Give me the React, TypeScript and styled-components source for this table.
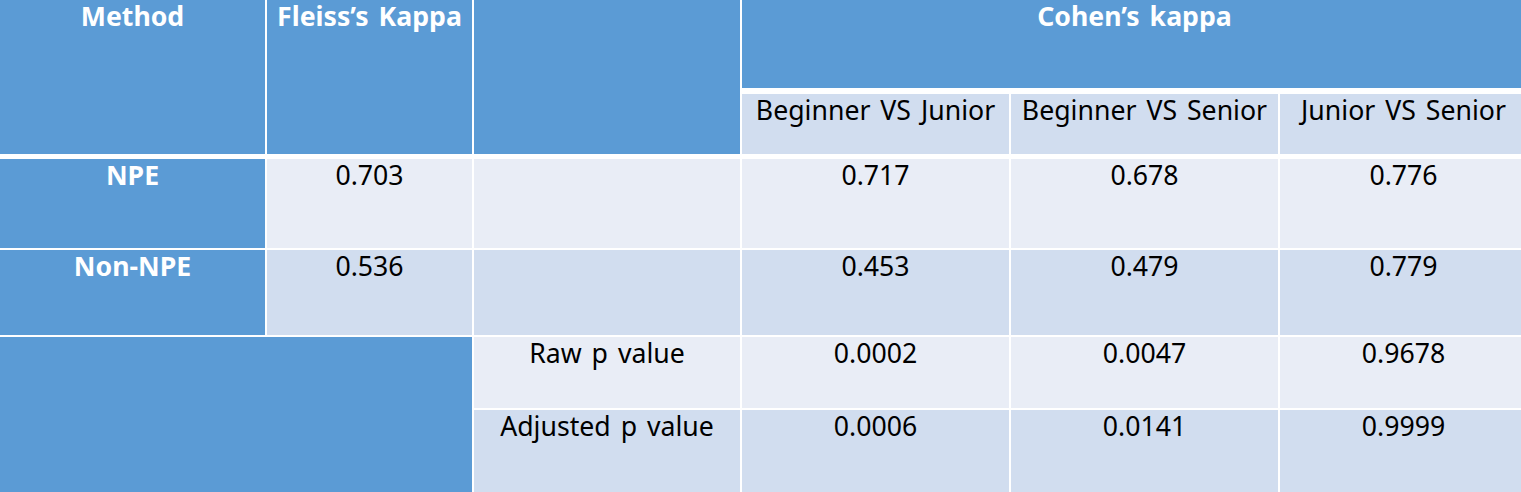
import React from 'react';
import styled, { createGlobalStyle } from 'styled-components';

const GlobalStyle = createGlobalStyle`
  html, body {
    margin: 0;
    padding: 0;
    background: #ffffff;
    overflow: hidden;
  }
`;

const Grid = styled.div`
  display: grid;
  grid-template-columns: 265px 205px 266px 267px 267px 247px;
  grid-template-rows: 92px 63px 89px 85px 71px 90px;
  gap: 2px;
  width: 1527px;
  background: #ffffff;
  font-family: 'Noto Sans', 'Noto Sans CJK KR', sans-serif;
  font-size: 26.67px;
  line-height: 1.2;
  color: #000000;
`;

type Tone = 'head' | 'light' | 'dark';

const toneColors: Record<Tone, string> = {
  head: '#5b9bd5',
  light: '#e9edf6',
  dark: '#d1ddef',
};

const Cell = styled.div<{
  $tone: Tone;
  $col: string;
  $row: string;
  $bold?: boolean;
  $mb?: number;
}>`
  grid-column: ${(p) => p.$col};
  grid-row: ${(p) => p.$row};
  background: ${(p) => toneColors[p.$tone]};
  color: ${(p) => (p.$tone === 'head' ? '#ffffff' : '#000000')};
  font-weight: ${(p) => (p.$bold ? 700 : 400)};
  margin-bottom: ${(p) => p.$mb ?? 0}px;
  text-align: center;
  padding-top: 0;
  white-space: nowrap;
  word-spacing: 3px;
`;

const pairs = ['Beginner VS Junior', 'Beginner VS Senior', 'Junior VS Senior'];

const rows = [
  { label: 'NPE', fleiss: '0.703', tone: 'light' as Tone, values: ['0.717', '0.678', '0.776'] },
  { label: 'Non-NPE', fleiss: '0.536', tone: 'dark' as Tone, values: ['0.453', '0.479', '0.779'] },
];

const pRows = [
  { label: 'Raw p value', tone: 'light' as Tone, values: ['0.0002', '0.0047', '0.9678'] },
  { label: 'Adjusted p value', tone: 'dark' as Tone, values: ['0.0006', '0.0141', '0.9999'] },
];

const App: React.FC = () => {
  return (
    <>
      <GlobalStyle />
      <Grid>
        <Cell $tone="head" $col="1" $row="1 / 3" $bold $mb={3}>Method</Cell>
        <Cell $tone="head" $col="2" $row="1 / 3" $bold $mb={3}>Fleiss’s Kappa</Cell>
        <Cell $tone="head" $col="3" $row="1 / 3" $mb={3} />
        <Cell $tone="head" $col="4 / 7" $row="1" $bold $mb={4}>Cohen’s kappa</Cell>
        {pairs.map((p, i) => (
          <Cell key={p} $tone="dark" $col={String(4 + i)} $row="2" $mb={3}>{p}</Cell>
        ))}

        {rows.map((r, ri) => (
          <React.Fragment key={r.label}>
            <Cell $tone="head" $col="1" $row={String(3 + ri)} $bold>{r.label}</Cell>
            <Cell $tone={r.tone} $col="2" $row={String(3 + ri)}>{r.fleiss}</Cell>
            <Cell $tone={r.tone} $col="3" $row={String(3 + ri)} />
            {r.values.map((v, i) => (
              <Cell key={i} $tone={r.tone} $col={String(4 + i)} $row={String(3 + ri)}>{v}</Cell>
            ))}
          </React.Fragment>
        ))}

        <Cell $tone="head" $col="1 / 3" $row="5 / 7" />
        {pRows.map((r, ri) => (
          <React.Fragment key={r.label}>
            <Cell $tone={r.tone} $col="3" $row={String(5 + ri)}>{r.label}</Cell>
            {r.values.map((v, i) => (
              <Cell key={i} $tone={r.tone} $col={String(4 + i)} $row={String(5 + ri)}>{v}</Cell>
            ))}
          </React.Fragment>
        ))}
      </Grid>
    </>
  );
};

export default App;
